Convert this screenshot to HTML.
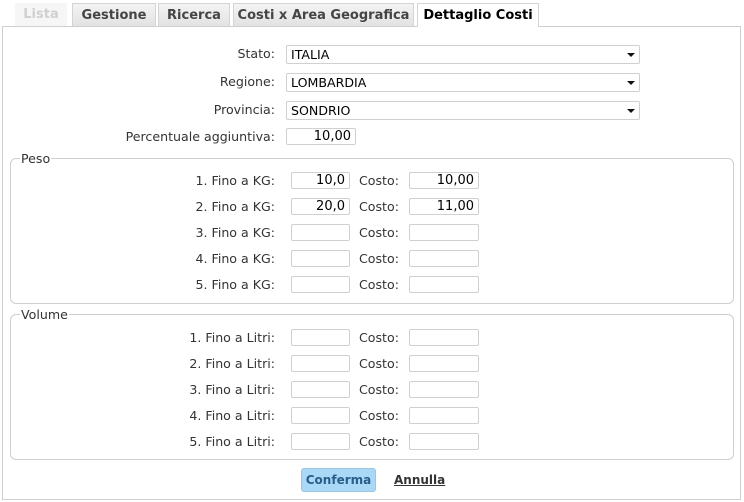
<!DOCTYPE html>
<html><head><style>
body{margin:0;width:744px;height:502px;background:#fff;position:relative;overflow:hidden;font-family:"DejaVu Sans","Liberation Sans",sans-serif;font-size:12.6px;color:#333}
.a{position:absolute}
.tab{position:absolute;top:3px;height:23px;box-sizing:border-box;border:1px solid #d4d4d4;border-bottom:none;background:linear-gradient(#f4f4f4,#e2e2e2);font-weight:bold;font-size:13px;color:#444;text-align:center;line-height:24px}
.panel{position:absolute;left:2px;top:26px;width:739px;height:474px;box-sizing:border-box;border:1px solid #cfcfcf}
.sel{position:absolute;left:286px;width:354px;height:19px;box-sizing:border-box;border:1px solid #d0d0d0;border-radius:2px;padding-left:4px;line-height:18px;color:#000}
.sel:after{content:"";position:absolute;right:4px;top:7px;border:4px solid transparent;border-top:4px solid #111;border-bottom:none}
.in{position:absolute;height:17px;box-sizing:border-box;border:1px solid #d0d0d0;border-radius:2px;text-align:right;padding-right:4px;line-height:16px;color:#000;font-size:13px}
.lbl{position:absolute;text-align:right;width:275px;left:0px;line-height:18px}
.c{position:absolute;left:359px;line-height:18px}
.fs{position:absolute;left:10px;width:724px;box-sizing:border-box;border:1px solid #cfcfcf;border-radius:6px}
.lg{position:absolute;left:20px;background:#fff;padding:0 1px;line-height:14px;font-size:12.6px}
</style></head><body>
<div class="a" style="left:15px;top:3px;width:52px;height:23px;background:#f6f6f6;color:#d0d0d0;font-weight:bold;font-size:13px;text-align:center;line-height:24px">Lista</div>
<div class="tab" style="left:72px;width:84px">Gestione</div>
<div class="tab" style="left:158px;width:72px">Ricerca</div>
<div class="tab" style="left:233px;width:181px">Costi x Area Geografica</div>
<div class="panel"></div>
<div class="tab" style="left:417px;width:122px;height:24px;background:#fff;color:#000;z-index:2">Dettaglio Costi</div>

<div class="lbl" style="top:45px">Stato:</div><div class="sel" style="top:45px">ITALIA</div>
<div class="lbl" style="top:73px">Regione:</div><div class="sel" style="top:73px">LOMBARDIA</div>
<div class="lbl" style="top:101px">Provincia:</div><div class="sel" style="top:101px">SONDRIO</div>
<div class="lbl" style="top:128px">Percentuale aggiuntiva:</div><div class="in" style="left:286px;top:128px;width:70px">10,00</div>

<div class="fs" style="top:158px;height:146px"></div><div class="lg" style="top:152px">Peso</div>
<div class="fs" style="top:314px;height:146px"></div><div class="lg" style="top:308px">Volume</div>

<div class="lbl" style="top:172px">1. Fino a KG:</div><div class="in" style="left:291px;top:172px;width:59px">10,0</div><div class="c" style="top:172px">Costo:</div><div class="in" style="left:409px;top:172px;width:70px">10,00</div>
<div class="lbl" style="top:198px">2. Fino a KG:</div><div class="in" style="left:291px;top:198px;width:59px">20,0</div><div class="c" style="top:198px">Costo:</div><div class="in" style="left:409px;top:198px;width:70px">11,00</div>
<div class="lbl" style="top:224px">3. Fino a KG:</div><div class="in" style="left:291px;top:224px;width:59px"></div><div class="c" style="top:224px">Costo:</div><div class="in" style="left:409px;top:224px;width:70px"></div>
<div class="lbl" style="top:250px">4. Fino a KG:</div><div class="in" style="left:291px;top:250px;width:59px"></div><div class="c" style="top:250px">Costo:</div><div class="in" style="left:409px;top:250px;width:70px"></div>
<div class="lbl" style="top:276px">5. Fino a KG:</div><div class="in" style="left:291px;top:276px;width:59px"></div><div class="c" style="top:276px">Costo:</div><div class="in" style="left:409px;top:276px;width:70px"></div>

<div class="lbl" style="top:329px">1. Fino a Litri:</div><div class="in" style="left:291px;top:329px;width:59px"></div><div class="c" style="top:329px">Costo:</div><div class="in" style="left:409px;top:329px;width:70px"></div>
<div class="lbl" style="top:355px">2. Fino a Litri:</div><div class="in" style="left:291px;top:355px;width:59px"></div><div class="c" style="top:355px">Costo:</div><div class="in" style="left:409px;top:355px;width:70px"></div>
<div class="lbl" style="top:381px">3. Fino a Litri:</div><div class="in" style="left:291px;top:381px;width:59px"></div><div class="c" style="top:381px">Costo:</div><div class="in" style="left:409px;top:381px;width:70px"></div>
<div class="lbl" style="top:407px">4. Fino a Litri:</div><div class="in" style="left:291px;top:407px;width:59px"></div><div class="c" style="top:407px">Costo:</div><div class="in" style="left:409px;top:407px;width:70px"></div>
<div class="lbl" style="top:433px">5. Fino a Litri:</div><div class="in" style="left:291px;top:433px;width:59px"></div><div class="c" style="top:433px">Costo:</div><div class="in" style="left:409px;top:433px;width:70px"></div>

<div class="a" style="left:301px;top:468px;width:75px;height:24px;box-sizing:border-box;background:#a9d9f7;border:1px solid #9cc5de;border-radius:3px;color:#2a5d8a;font-weight:bold;text-align:center;line-height:22px;font-size:12px">Conferma</div>
<div class="a" style="left:394px;top:468px;line-height:24px;font-weight:bold;text-decoration:underline;color:#333;font-size:12px">Annulla</div>
</body></html>
